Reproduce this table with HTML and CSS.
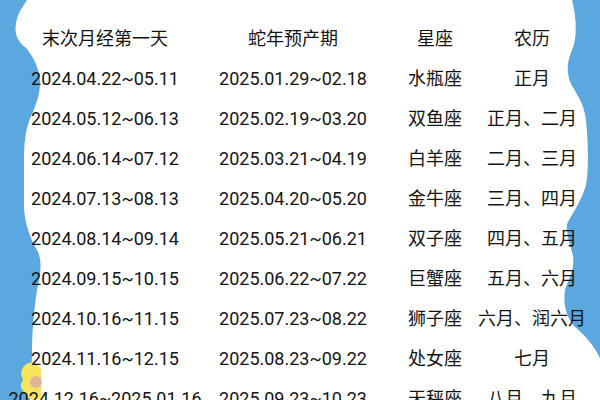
FILE: index.html
```html
<!DOCTYPE html>
<html lang="zh-CN">
<head>
<meta charset="utf-8">
<link rel="stylesheet" href="styles.css">
</head>
<body>
<div class="page">
  <svg class="bg" width="600" height="400" viewBox="0 0 600 400" xmlns="http://www.w3.org/2000/svg">
    <path fill="#ffffff" d="M27 0 C22 8 17 14 16 24 C14 34 18 42 26 48 C33 56 40 70 40 82 C40 95 36 105 31 116 C26 128 24 140 24 160 L24 205 C24 222 30 238 38 252 C42 262 41 272 37 290 C34 310 32 330 32 355 L30 400 L600 400 L600 358 C594 346 586 336 574 326 C566 316 563 304 565 290 C568 280 575 270 573 256 C570 244 566 234 567 224 C572 214 582 200 586 185 C589 168 588 140 586 120 C584 104 578 96 571 84 C566 72 567 62 572 50 C577 38 577 20 572 0 Z"/>
    <path fill="#f6e45a" d="M24 366 C30 360 38 362 41 370 L41 398 C34 402 26 398 24 392 C20 388 20 384 23 380 C20 374 21 370 24 366 Z"/>
    <circle cx="36" cy="382" r="6" fill="#e2b49a"/>
  </svg>
  <div class="table">
    <div class="row head"><span>末次月经第一天</span><span>蛇年预产期</span><span>星座</span><span>农历</span></div>
    <div class="row"><span>2024.04.22~05.11</span><span>2025.01.29~02.18</span><span>水瓶座</span><span>正月</span></div>
    <div class="row"><span>2024.05.12~06.13</span><span>2025.02.19~03.20</span><span>双鱼座</span><span>正月、二月</span></div>
    <div class="row"><span>2024.06.14~07.12</span><span>2025.03.21~04.19</span><span>白羊座</span><span>二月、三月</span></div>
    <div class="row"><span>2024.07.13~08.13</span><span>2025.04.20~05.20</span><span>金牛座</span><span>三月、四月</span></div>
    <div class="row"><span>2024.08.14~09.14</span><span>2025.05.21~06.21</span><span>双子座</span><span>四月、五月</span></div>
    <div class="row"><span>2024.09.15~10.15</span><span>2025.06.22~07.22</span><span>巨蟹座</span><span>五月、六月</span></div>
    <div class="row"><span>2024.10.16~11.15</span><span>2025.07.23~08.22</span><span>狮子座</span><span>六月、润六月</span></div>
    <div class="row"><span>2024.11.16~12.15</span><span>2025.08.23~09.22</span><span>处女座</span><span>七月</span></div>
    <div class="row"><span>2024.12.16~2025.01.16</span><span>2025.09.23~10.23</span><span>天秤座</span><span>八月、九月</span></div>
  </div>
</div>
</body>
</html>
```

FILE: styles.css
```css
html, body {
  margin: 0;
  padding: 0;
}

.page {
  position: relative;
  width: 600px;
  height: 400px;
  overflow: hidden;
  background: #5ba8e0;
  font-family: "Roboto", "Noto Sans CJK SC", sans-serif;
  color: #141414;
}

.bg {
  position: absolute;
  left: 0;
  top: 0;
}

.table {
  position: relative;
  padding: 19px 0 0 11px;
}

.row {
  display: grid;
  grid-template-columns: 188px 188px 96px 98px;
  height: 40px;
  align-items: center;
  font-size: 18px;
  line-height: 40px;
  text-align: center;
  white-space: nowrap;
}

.row span {
  display: flex;
  justify-content: center;
}
```
